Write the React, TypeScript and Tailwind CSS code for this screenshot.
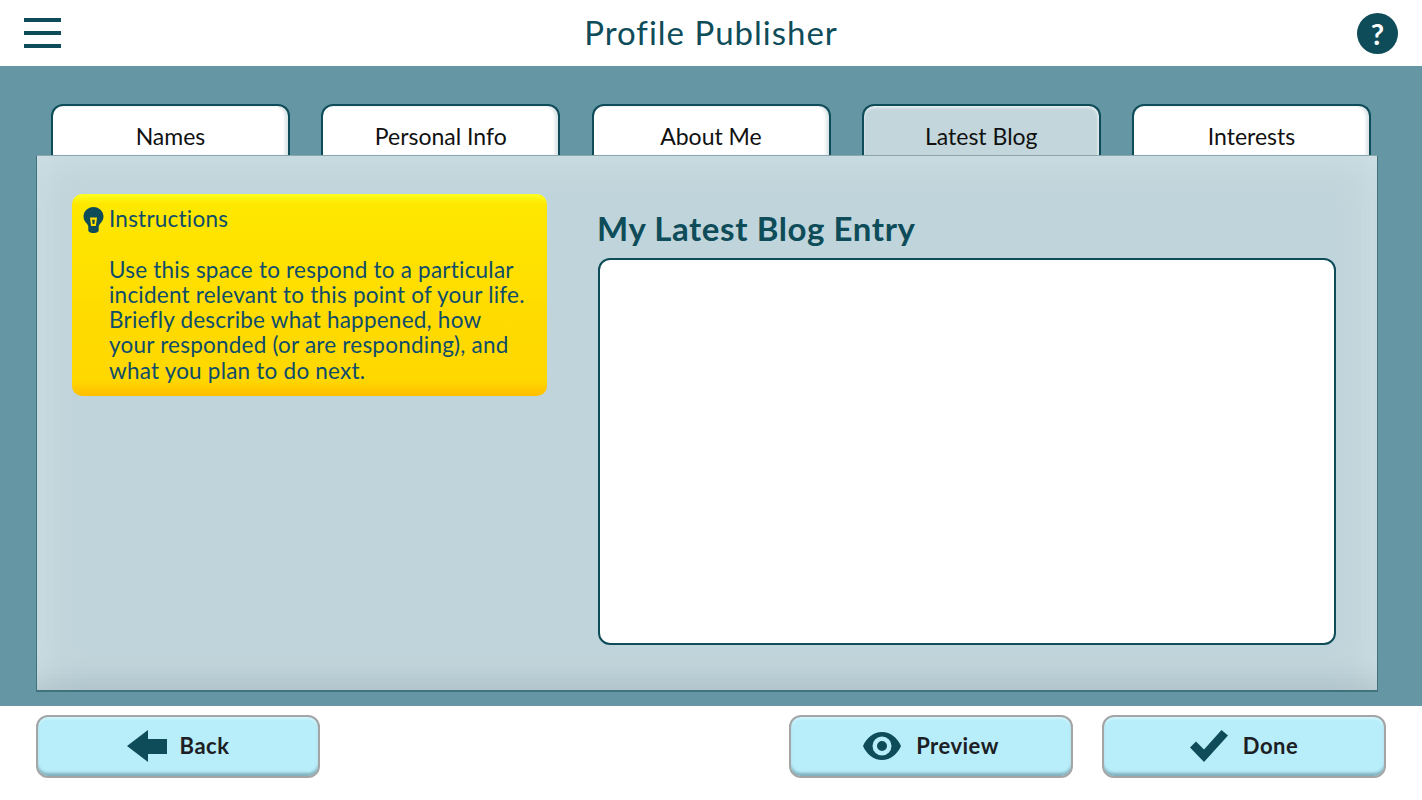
import React from "react";

const tabs = ["Names", "Personal Info", "About Me", "Latest Blog", "Interests"];

function Btn({ icon, label }: { icon: React.ReactNode; label: string }) {
  return (
    <div className="flex h-[63px] w-[284px] items-center justify-center rounded-[12px] border-2 border-[#a3a5a6] bg-[#b8eefa] pb-[2px] shadow-[inset_0_-4px_3px_-1px_rgba(60,100,110,0.45),inset_0_2px_2px_rgba(255,255,255,0.35)]">
      {icon}
      <span className="font-['Lato',sans-serif] text-[22px] font-bold leading-none tracking-[0.5px] text-[#1c2024]">{label}</span>
    </div>
  );
}

export default function App() {
  return (
    <div className="flex h-[800px] w-[1422px] flex-col overflow-hidden bg-white font-['Lato',sans-serif]">
      <header className="flex h-[66px] shrink-0 items-center justify-between pl-6 pr-6">
        <div className="flex w-[37px] flex-col gap-[9px]">
          <div className="h-1 bg-[#0e4c59]" />
          <div className="h-1 bg-[#0e4c59]" />
          <div className="h-1 bg-[#0e4c59]" />
        </div>
        <h1 className="pb-[2px] pl-[4px] text-[33px] font-normal leading-none tracking-[1px] text-[#0e4c59]">Profile Publisher</h1>
        <div className="flex h-[41px] w-[41px] items-center justify-center rounded-full bg-[#0e4c59] text-[29px] font-bold leading-none text-white">?</div>
      </header>

      <main className="flex h-[640px] shrink-0 flex-col bg-[#6497a3] pb-[14px] pl-9 pr-11 pt-[38px]">
        <div className="flex h-[52px] shrink-0 justify-between pl-[15px] pr-[7px]">
          {tabs.map((t) => {
            const active = t === "Latest Blog";
            return (
              <div
                key={t}
                className={
                  "flex h-[52px] w-[239px] items-start justify-center rounded-t-[12px] border-2 border-b-0 border-[#0e4c59] pt-[16px] text-[23px] leading-[28px] text-[#111] " +
                  (active
                    ? "bg-[#c2d6db] shadow-[inset_0_2px_3px_rgba(255,255,255,0.6),inset_-2px_0_2px_rgba(255,255,255,0.3)]"
                    : "bg-white shadow-[inset_-3px_0_3px_rgba(120,150,160,0.25)]")
                }
              >
                {t}
              </div>
            );
          })}
        </div>
        <section className="-mt-px flex h-[537px] w-[1342px] shrink-0 items-start border border-b-2 border-[#8aa5ab] border-b-[#41737f] border-r-[#41737f] border-l-[#41737f] bg-[#c0d5db] pl-[35px] pt-[38px] shadow-[inset_0_0_40px_rgba(235,245,248,0.4),inset_0_-30px_25px_-22px_rgba(100,130,140,0.4)]">
          <div className="flex h-[202px] w-[475px] shrink-0 rounded-[10px] bg-[linear-gradient(#ffff22_0px,#ffe800_10px,#ffdb00_60%,#ffd800_92%,#ffbe00_100%)] pl-[11px] pt-3">
            <svg viewBox="0 0 20 26" className="mt-[1px] h-[26px] w-[21px] shrink-0">
              <path fill="#0e4c59" d="M10 0C4.5 0 0 4.3 0 9.6c0 3.3 1.6 5 3 6.7.8 1 1.6 2 1.8 3.2v3.5c0 1.600 1.400 3 5.200 3s5.200-1.400 5.200-3v-3.500c.2-1.200 1-2.200 1.800-3.200 1.400-1.700 3-3.400 3-6.700C20 4.300 15.500 0 10 0z" />
              <path fill="#ffe000" d="M6.500 10.500h7l-1.100 8.500H7.600z" />
              <path fill="#0e4c59" d="M8.600 12.800h2.800l-.5 4.200H9.100z" />
            </svg>
            <div className="ml-[5px] w-[430px] text-[22.5px] leading-[25.2px] tracking-[0.22px] text-[#0e4c6c]">
              <div className="mb-[25.5px]">Instructions</div>
              <div>Use this space to respond to a particular</div>
              <div>incident relevant to this point of your life.</div>
              <div>Briefly describe what happened, how</div>
              <div>your responded (or are responding), and</div>
              <div>what you plan to do next.</div>
            </div>
          </div>
          <div className="ml-[51px] flex w-[738px] shrink-0 flex-col">
            <h2 className="-ml-px mb-[10px] mt-[14px] text-[33px] font-bold leading-[40px] tracking-[0.6px] text-[#0e4c59]">My Latest Blog Entry</h2>
            <div className="h-[387px] rounded-[12px] border-2 border-[#0e4c59] bg-white" />
          </div>
        </section>
      </main>

      <footer className="flex flex-1 items-start pl-9 pr-9 pt-[9px]">
        <Btn
          label="Back"
          icon={
            <svg viewBox="0 0 40 32" className="mr-[13px] h-[32px] w-[40px]">
              <path fill="#0e4c59" d="M0 16 21 0v9h19v15H21v8z" />
            </svg>
          }
        />
        <div className="ml-auto flex gap-[29px]">
          <Btn
            label="Preview"
            icon={
              <svg viewBox="0 0 38 28" className="mr-[15px] h-[28px] w-[38px]">
                <path fill="#0e4c59" fillRule="evenodd" d="M19 0c8.500 0 15.500 6 19 14-3.500 8-10.500 14-19 14S3.500 22 0 14C3.500 6 10.500 0 19 0zm0 4.500a9.500 9.500 0 1 0 0 19 9.500 9.500 0 0 0 0-19zm0 4.500a5 5 0 1 1 0 10 5 5 0 0 1 0-10z" />
              </svg>
            }
          />
          <Btn
            label="Done"
            icon={
              <svg viewBox="0 0 38 32" className="mr-[15px] h-[32px] w-[38px]">
                <path fill="#0e4c59" d="M0 17.500 6 11.500l8 8L31.500 0 38 5.500 14 32z" />
              </svg>
            }
          />
        </div>
      </footer>
    </div>
  );
}
